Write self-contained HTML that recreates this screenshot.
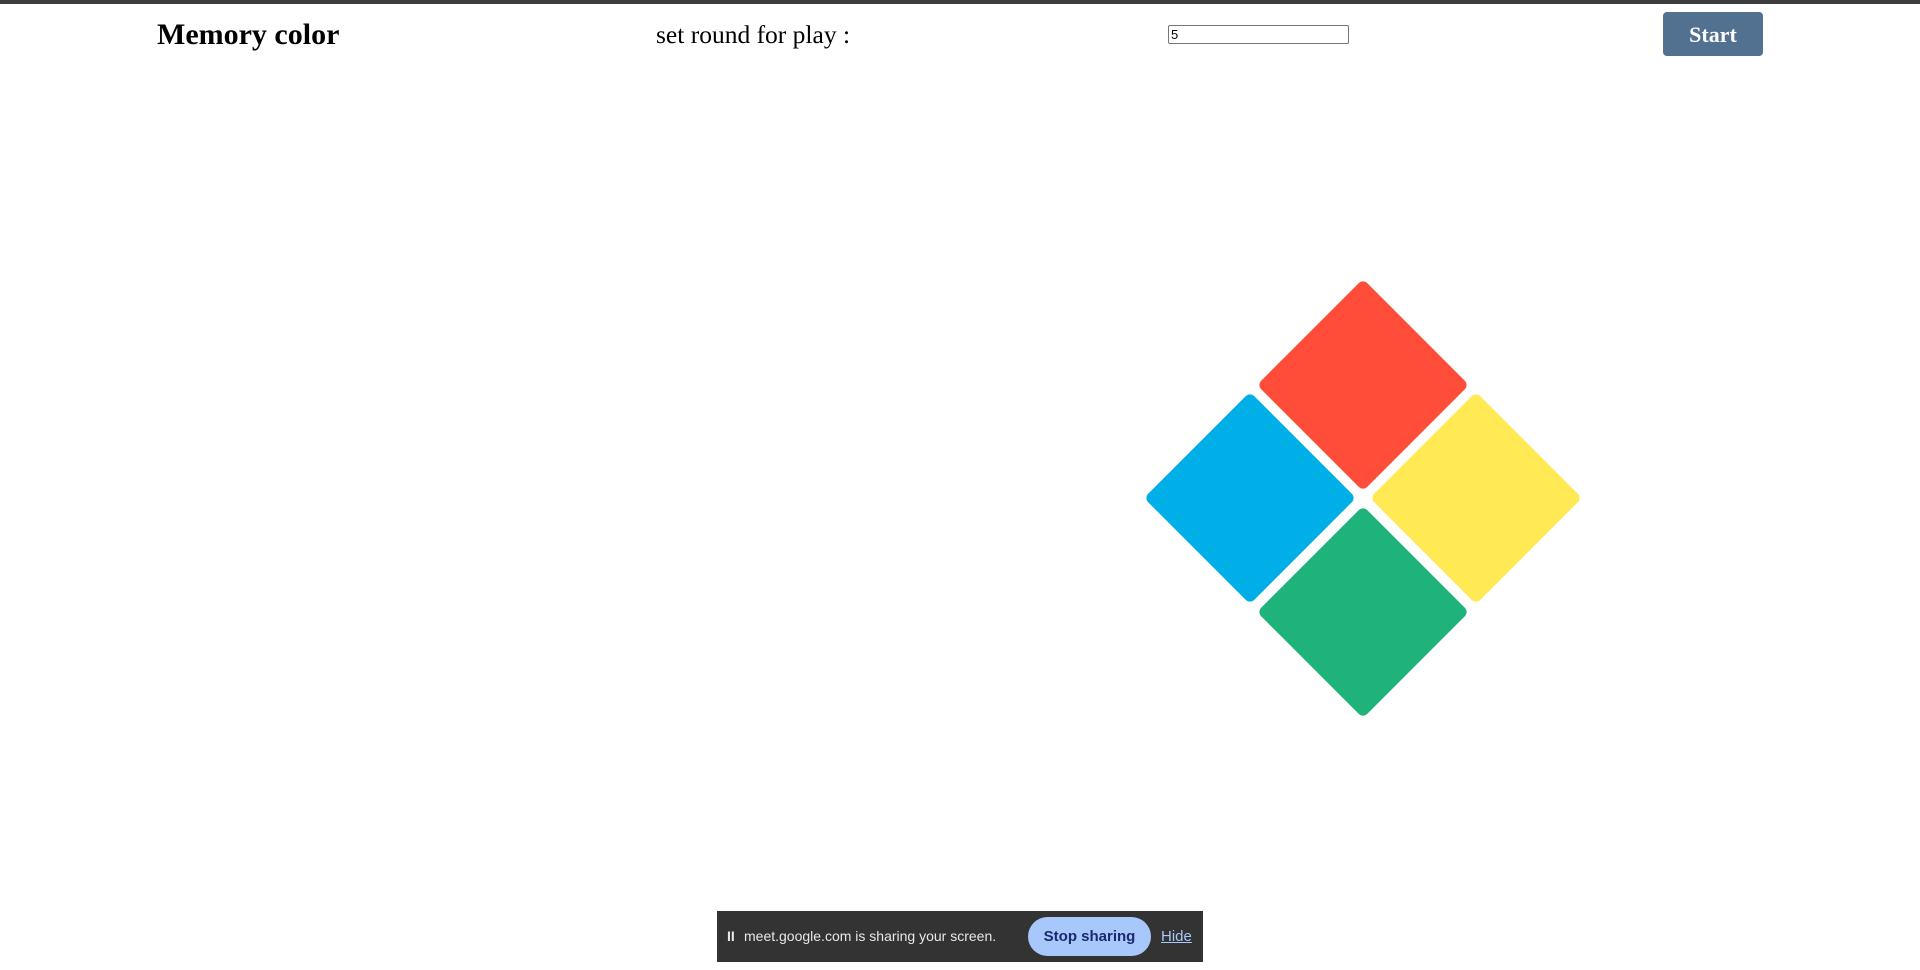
<!DOCTYPE html>
<html><head><style>
body{margin:0;width:1920px;height:970px;background:#fff;position:relative;overflow:hidden;font-family:"Liberation Serif",serif}
.bar{position:absolute;left:0;top:0;width:1920px;height:4px;background:#3c3c3c}
.t{position:absolute;white-space:nowrap}
.d{position:absolute;width:150px;height:150px;border-radius:6px;transform:rotate(45deg)}
</style></head><body>
<div class="bar"></div>
<div class="t" style="left:157px;top:18px;font-size:30px;font-weight:bold">Memory color</div>
<div class="t" style="left:656px;top:20px;font-size:25.5px">set round for play :</div>
<div style="position:absolute;left:1168px;top:25px;border:1px solid #767676;border-radius:2px;font:13px 'Liberation Sans',sans-serif;line-height:17px;padding-left:2px;box-sizing:border-box;width:181px;height:19px">5</div>
<div style="position:absolute;left:1663px;top:12px;width:100px;height:44px;background:#527090;border-radius:4px;color:#fff;font-weight:bold;font-size:22px;text-align:center;line-height:46px">Start</div>
<div class="d" style="background:#ff4d3a;left:1288px;top:310px"></div>
<div class="d" style="background:#00aee8;left:1175px;top:423px"></div>
<div class="d" style="background:#ffe955;left:1401px;top:423px"></div>
<div class="d" style="background:#1fb27a;left:1288px;top:537px"></div>
<div style="position:absolute;left:717px;top:911px;width:486px;height:51px;background:#333;font-family:'Liberation Sans',sans-serif;font-size:14px;color:#e8e8e8">
<span style="position:absolute;left:10px;top:17px;font-weight:bold">II</span>
<span style="position:absolute;left:27px;top:17px">meet.google.com is sharing your screen.</span>
<span style="position:absolute;left:311px;top:6px;width:123px;height:39px;border-radius:20px;background:#a8c7fa;color:#1a2a6e;line-height:39px;text-align:center;font-size:15px;font-weight:bold">Stop sharing</span>
<span style="position:absolute;left:444px;top:17px;color:#a8c7fa;text-decoration:underline;font-size:15px">Hide</span>
</div>
</body></html>
